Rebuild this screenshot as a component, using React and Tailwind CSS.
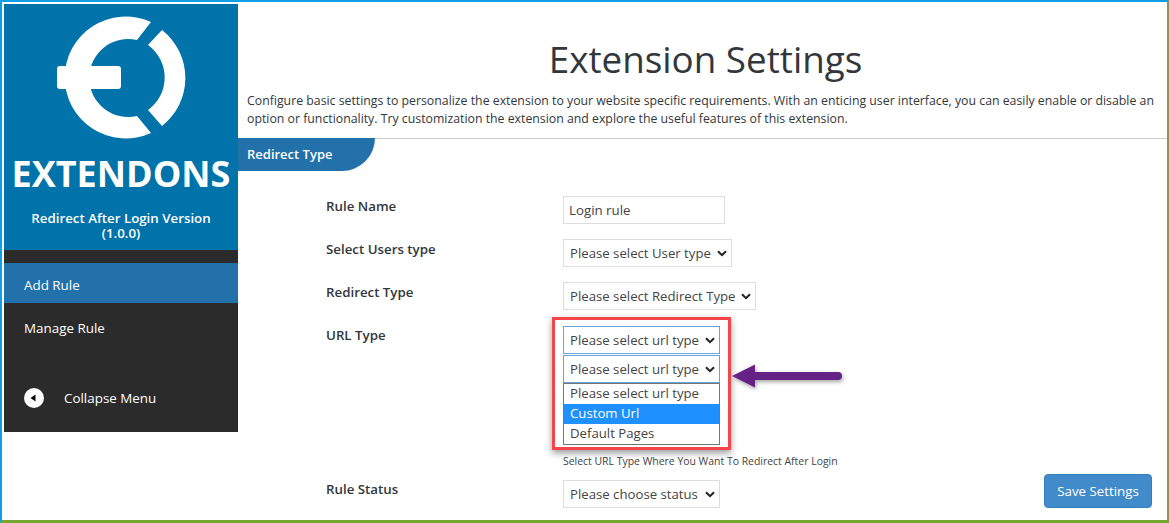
import React from 'react';

const Chevron = () => (
  <svg className="w-[10px] h-[7px] shrink-0" viewBox="0 0 10 7" fill="none" stroke="#222" strokeWidth="2">
    <path d="M1 1.2 L5 5.2 L9 1.2" />
  </svg>
);

const Select = ({ label, width, focus }) => (
  <div
    className={`flex items-center justify-between h-7 pl-[6px] pr-[4px] bg-white text-[13.2px] text-[#444] border ${
      focus ? 'border-[#6aa5d8]' : 'border-[#ddd]'
    } ${width}`}
  >
    <span className="whitespace-nowrap pt-[2px]">{label}</span>
    <Chevron />
  </div>
);

const Logo = () => (
  <svg className="block w-[234px] h-[145px]" viewBox="4 4 234 145" fill="white">
    <path d="M151 22 A61 61 0 1 0 151 133 L137 116 A39 39 0 1 1 137 40 Z" />
    <path d="M162 30 A61 61 0 0 1 162 126 L148 110 A40 40 0 0 0 148 45 Z" />
    <rect x="57" y="66" width="64" height="23" rx="3" />
  </svg>
);

const Sidebar = () => (
  <aside className="w-[234px] h-[428px] shrink-0 bg-[#2b2b2b] text-white text-[13.4px]">
    <div className="h-[246px] bg-[#0073aa] text-center">
      <Logo />
      <div className="text-[36px] leading-[50px] font-bold">EXTENDONS</div>
      <div className="mt-3 text-[13.3px] font-semibold leading-[15px]">
        Redirect After Login Version
        <br />
        (1.0.0)
      </div>
    </div>
    <div className="mt-[13px] h-10 flex items-center pl-5 pt-[5px] bg-[#2271aa]">Add Rule</div>
    <div className="h-[50px] flex items-center pl-5">Manage Rule</div>
    <div className="mt-[35px] flex items-center pl-5 gap-5">
      <svg className="w-5 h-5" viewBox="0 0 20 20">
        <circle cx="10" cy="10" r="10" fill="white" />
        <path d="M6.5 10 L11.5 6.5 V13.5 Z" fill="black" />
      </svg>
      <span>Collapse Menu</span>
    </div>
  </aside>
);

const Row = ({ label, className, labelClass, children }) => (
  <div className={`flex ${className}`}>
    <div className={`w-[237px] shrink-0 font-semibold text-[13.3px] leading-5 text-[#32373c] ${labelClass || ''}`}>{label}</div>
    {children}
  </div>
);

export default function App() {
  return (
    <div className="h-[523px] overflow-hidden bg-white border-t-2 border-l-2 border-r-2 border-b-[3px] border-t-[#0e9fe6] border-l-[#0e9fe6] border-r-[#76a72f] border-b-[#76a72f] font-['Open_Sans',sans-serif]">
      <div className="flex pt-[2px] pl-[2px]">
        <Sidebar />
        <main className="relative flex-1 min-w-0">
          <header className="h-[135px] border-b border-[#ccc] text-[#32373c]">
            <h1 className="pt-[30px] pl-[6px] text-center text-[36.8px] leading-[50px]">Extension Settings</h1>
            <p className="mt-2 pl-[9px] text-[12.3px] leading-[18px] whitespace-nowrap">
              Configure basic settings to personalize the extension to your website specific requirements. With an enticing user interface, you can easily enable or disable an
              <br />
              option or functionality. Try customization the extension and explore the useful features of this extension.
            </p>
          </header>
          <div className="-mt-px w-[137px] h-[33px] pl-[9px] flex items-center bg-[#2271aa] rounded-br-[34px] text-white text-[13px] font-semibold">
            Redirect Type
          </div>

          <div className="pl-[88px] pt-[25px] pb-2">
            <Row label="Rule Name" className="h-[43px]">
              <div className="w-[162px] h-7 flex items-center pl-[5px] pt-[2px] border border-[#ddd] text-[13.3px] text-[#444]">Login rule</div>
            </Row>
            <Row label="Select Users type" className="h-[43px]">
              <Select label="Please select User type" width="w-[169px]" />
            </Row>
            <Row label="Redirect Type" className="h-[44px]">
              <Select label="Please select Redirect Type" width="w-[193px]" />
            </Row>
            <Row label="URL Type" className="h-[154px]" labelClass="-mt-px">
              <div>
                <Select label="Please select url type" width="w-[157px]" focus />
                <div className="mt-px">
                  <Select label="Please select url type" width="w-[157px]" focus />
                </div>
                <div className="w-[157px] border border-[#767676] text-[13.2px] leading-[18px] text-[#444] bg-white">
                  <div className="px-[6px] pb-[2px]">Please select url type</div>
                  <div className="px-[6px] pb-[2px] bg-[#1e90ff] text-white">Custom Url</div>
                  <div className="px-[6px] pb-[2px]">Default Pages</div>
                </div>
                <div className="mt-[9px] text-[10.45px] leading-[14px] text-[#444] whitespace-nowrap">
                  Select URL Type Where You Want To Redirect After Login
                </div>
              </div>
            </Row>
            <Row label="Rule Status" className="h-7" labelClass="-mt-px">
              <Select label="Please choose status" width="w-[157px]" />
            </Row>
          </div>

          {/* callout added on top of the screenshot */}
          <div className="absolute left-[314px] top-[313px] w-[179px] h-[133px] border-[3px] border-[#f5444a] shadow-[0_3px_7px_rgba(0,0,0,0.4)]" />
          <svg className="absolute left-[494px] top-[358px] w-[112px] h-[30px] overflow-visible" viewBox="0 0 112 30">
            <path d="M0 14 L23 2.5 V10 H106 Q110 10 110 14 Q110 18 106 18 H23 V25.5 Z" fill="#642285" style={{ filter: 'drop-shadow(1px 2px 2px rgba(0,0,0,.35))' }} />
          </svg>
          <button className="absolute right-[15px] top-[470px] w-[108px] h-[34px] pt-px rounded bg-[#428bca] border border-[#357ebd] text-white text-[13.3px]">
            Save Settings
          </button>
        </main>
      </div>
    </div>
  );
}
